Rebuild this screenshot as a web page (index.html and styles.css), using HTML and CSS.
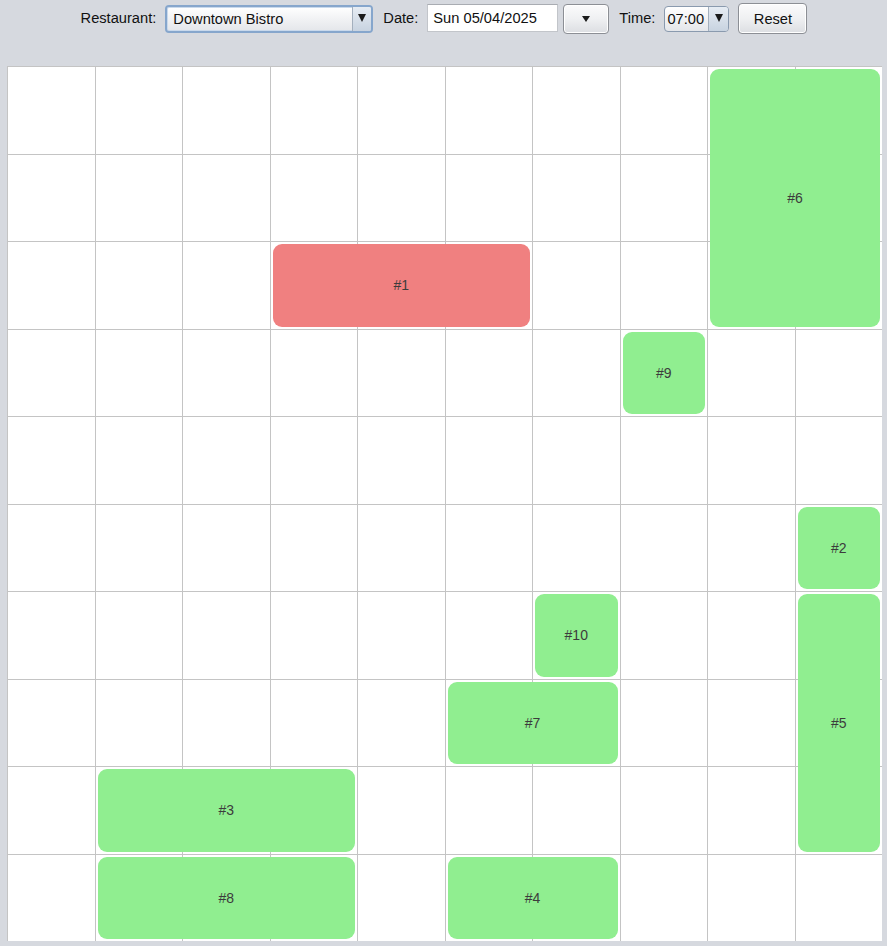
FILE: index.html
```html
<!DOCTYPE html>
<html>
<head>
<meta charset="utf-8">
<link rel="stylesheet" href="styles.css">
</head>
<body>
<div class="toolbar">
  <span class="lbl">Restaurant:</span>
  <div class="combo combo-main focused"><span class="combo-text">Downtown Bistro</span><span class="combo-arrow"><span class="tri"></span></span></div>
  <span class="lbl">Date:</span>
  <div class="datepair">
    <div class="datefield">Sun 05/04/2025</div>
    <button class="btn datebtn"><span class="tri"></span></button>
  </div>
  <span class="lbl">Time:</span>
  <div class="combo combo-time"><span class="combo-text">07:00</span><span class="combo-arrow"><span class="tri"></span></span></div>
  <button class="btn reset">Reset</button>
</div>
<div class="board">
  <div class="cells" id="cells"></div>
</div>
<script>
(function(){
  var grid = document.getElementById('cells');
  for (var i = 0; i < 100; i++) {
    var c = document.createElement('div');
    c.className = 'cell';
    c.style.gridRow = (Math.floor(i/10)+1);
    c.style.gridColumn = (i%10+1);
    grid.appendChild(c);
  }
  var res = [
    ['#6', 9, 2, 1, 3, 'free'],
    ['#1', 4, 3, 3, 1, 'busy'],
    ['#9', 8, 1, 4, 1, 'free'],
    ['#2', 10, 1, 6, 1, 'free'],
    ['#10', 7, 1, 7, 1, 'free'],
    ['#5', 10, 1, 7, 3, 'free'],
    ['#7', 6, 2, 8, 1, 'free'],
    ['#3', 2, 3, 9, 1, 'free'],
    ['#8', 2, 3, 10, 1, 'free'],
    ['#4', 6, 2, 10, 1, 'free']
  ];
  res.forEach(function(r){
    var b = document.createElement('div');
    b.className = 'table ' + r[5];
    b.textContent = r[0];
    b.style.gridColumn = r[1] + ' / span ' + r[2];
    b.style.gridRow = r[3] + ' / span ' + r[4];
    grid.appendChild(b);
  });
})();
</script>
</body>
</html>
```
FILE: styles.css
```css
html, body {
  margin: 0;
  padding: 0;
}
body {
  background: #d6d9df;
  width: 887px;
  height: 946px;
  overflow: hidden;
  font-family: "Liberation Sans", Arial, sans-serif;
  font-size: 11pt;
  color: #111;
}
.toolbar {
  height: 66px;
  box-sizing: border-box;
  display: flex;
  justify-content: center;
  align-items: flex-start;
  gap: 9px;
  padding-top: 3px;
}
.lbl {
  line-height: 31px;
  height: 31px;
  margin: 0 0 0 1px;
}
.combo {
  display: flex;
  box-sizing: border-box;
  border: 1px solid #8a9aae;
  border-radius: 4px;
  background: linear-gradient(#ffffff, #f1f2f4 50%, #e4e6ea);
  overflow: hidden;
}
.combo-main {
  width: 208px;
  height: 28px;
  margin-top: 2px;
}
.combo-main.focused {
  border: 2px solid #86a6cc;
  box-shadow: inset 0 0 0 1px #c9d9ec;
}
.combo-text {
  flex: 1;
  padding-left: 6px;
  line-height: 24px;
  white-space: nowrap;
}
.combo-arrow {
  width: 18px;
  border-left: 1px solid #a3afbd;
  background: linear-gradient(#e6ecf3, #c8d3e0);
  display: flex;
  align-items: center;
  justify-content: center;
}
.tri {
  width: 0;
  height: 0;
  border-left: 4px solid transparent;
  border-right: 4px solid transparent;
  border-top: 8px solid #1b1b1b;
  margin-top: -2px;
}
.datepair {
  display: flex;
  gap: 5px;
  align-items: flex-start;
}
.datefield {
  width: 131px;
  height: 28px;
  box-sizing: border-box;
  margin-top: 1px;
  background: #fff;
  border: 1px solid #c2c5ca;
  border-top-color: #a9acb2;
  padding-left: 5px;
  line-height: 26px;
}
.btn {
  box-sizing: border-box;
  font: inherit;
  color: #111;
  border: 1px solid #8c8f95;
  border-radius: 4px;
  background: linear-gradient(#fbfbfc, #eff0f2 50%, #dcdee2);
  box-shadow: inset 0 0 0 1px #ffffff;
  padding: 0;
  display: flex;
  align-items: center;
  justify-content: center;
}
.datebtn {
  width: 46px;
  height: 30px;
  margin-top: 1px;
}
.datebtn .tri {
  border-left-width: 4px;
  border-right-width: 4px;
  border-top-width: 6px;
  margin-top: 0;
}
.combo-time {
  width: 65px;
  height: 26px;
  margin-top: 3px;
}
.combo-time .combo-text {
  padding-left: 2px;
  line-height: 24px;
}
.combo-time .combo-arrow {
  width: 19px;
}
.reset {
  width: 69px;
  height: 31px;
}
.board {
  padding-left: 7px;
}
.cells {
  width: 875px;
  height: 875px;
  background: #fff;
  display: grid;
  grid-template-columns: repeat(10, 1fr);
  grid-template-rows: repeat(10, 1fr);
}
.cell {
  border-top: 1px solid #c4c4c4;
  border-left: 1px solid #c4c4c4;
}
.table {
  margin: 3px 2px 2px 3px;
  border-radius: 9px;
  display: flex;
  align-items: center;
  justify-content: center;
  font-size: 14px;
  color: #3c3c3c;
  z-index: 1;
}
.table.free {
  background: #90ee90;
}
.table.busy {
  background: #f08080;
}
```
